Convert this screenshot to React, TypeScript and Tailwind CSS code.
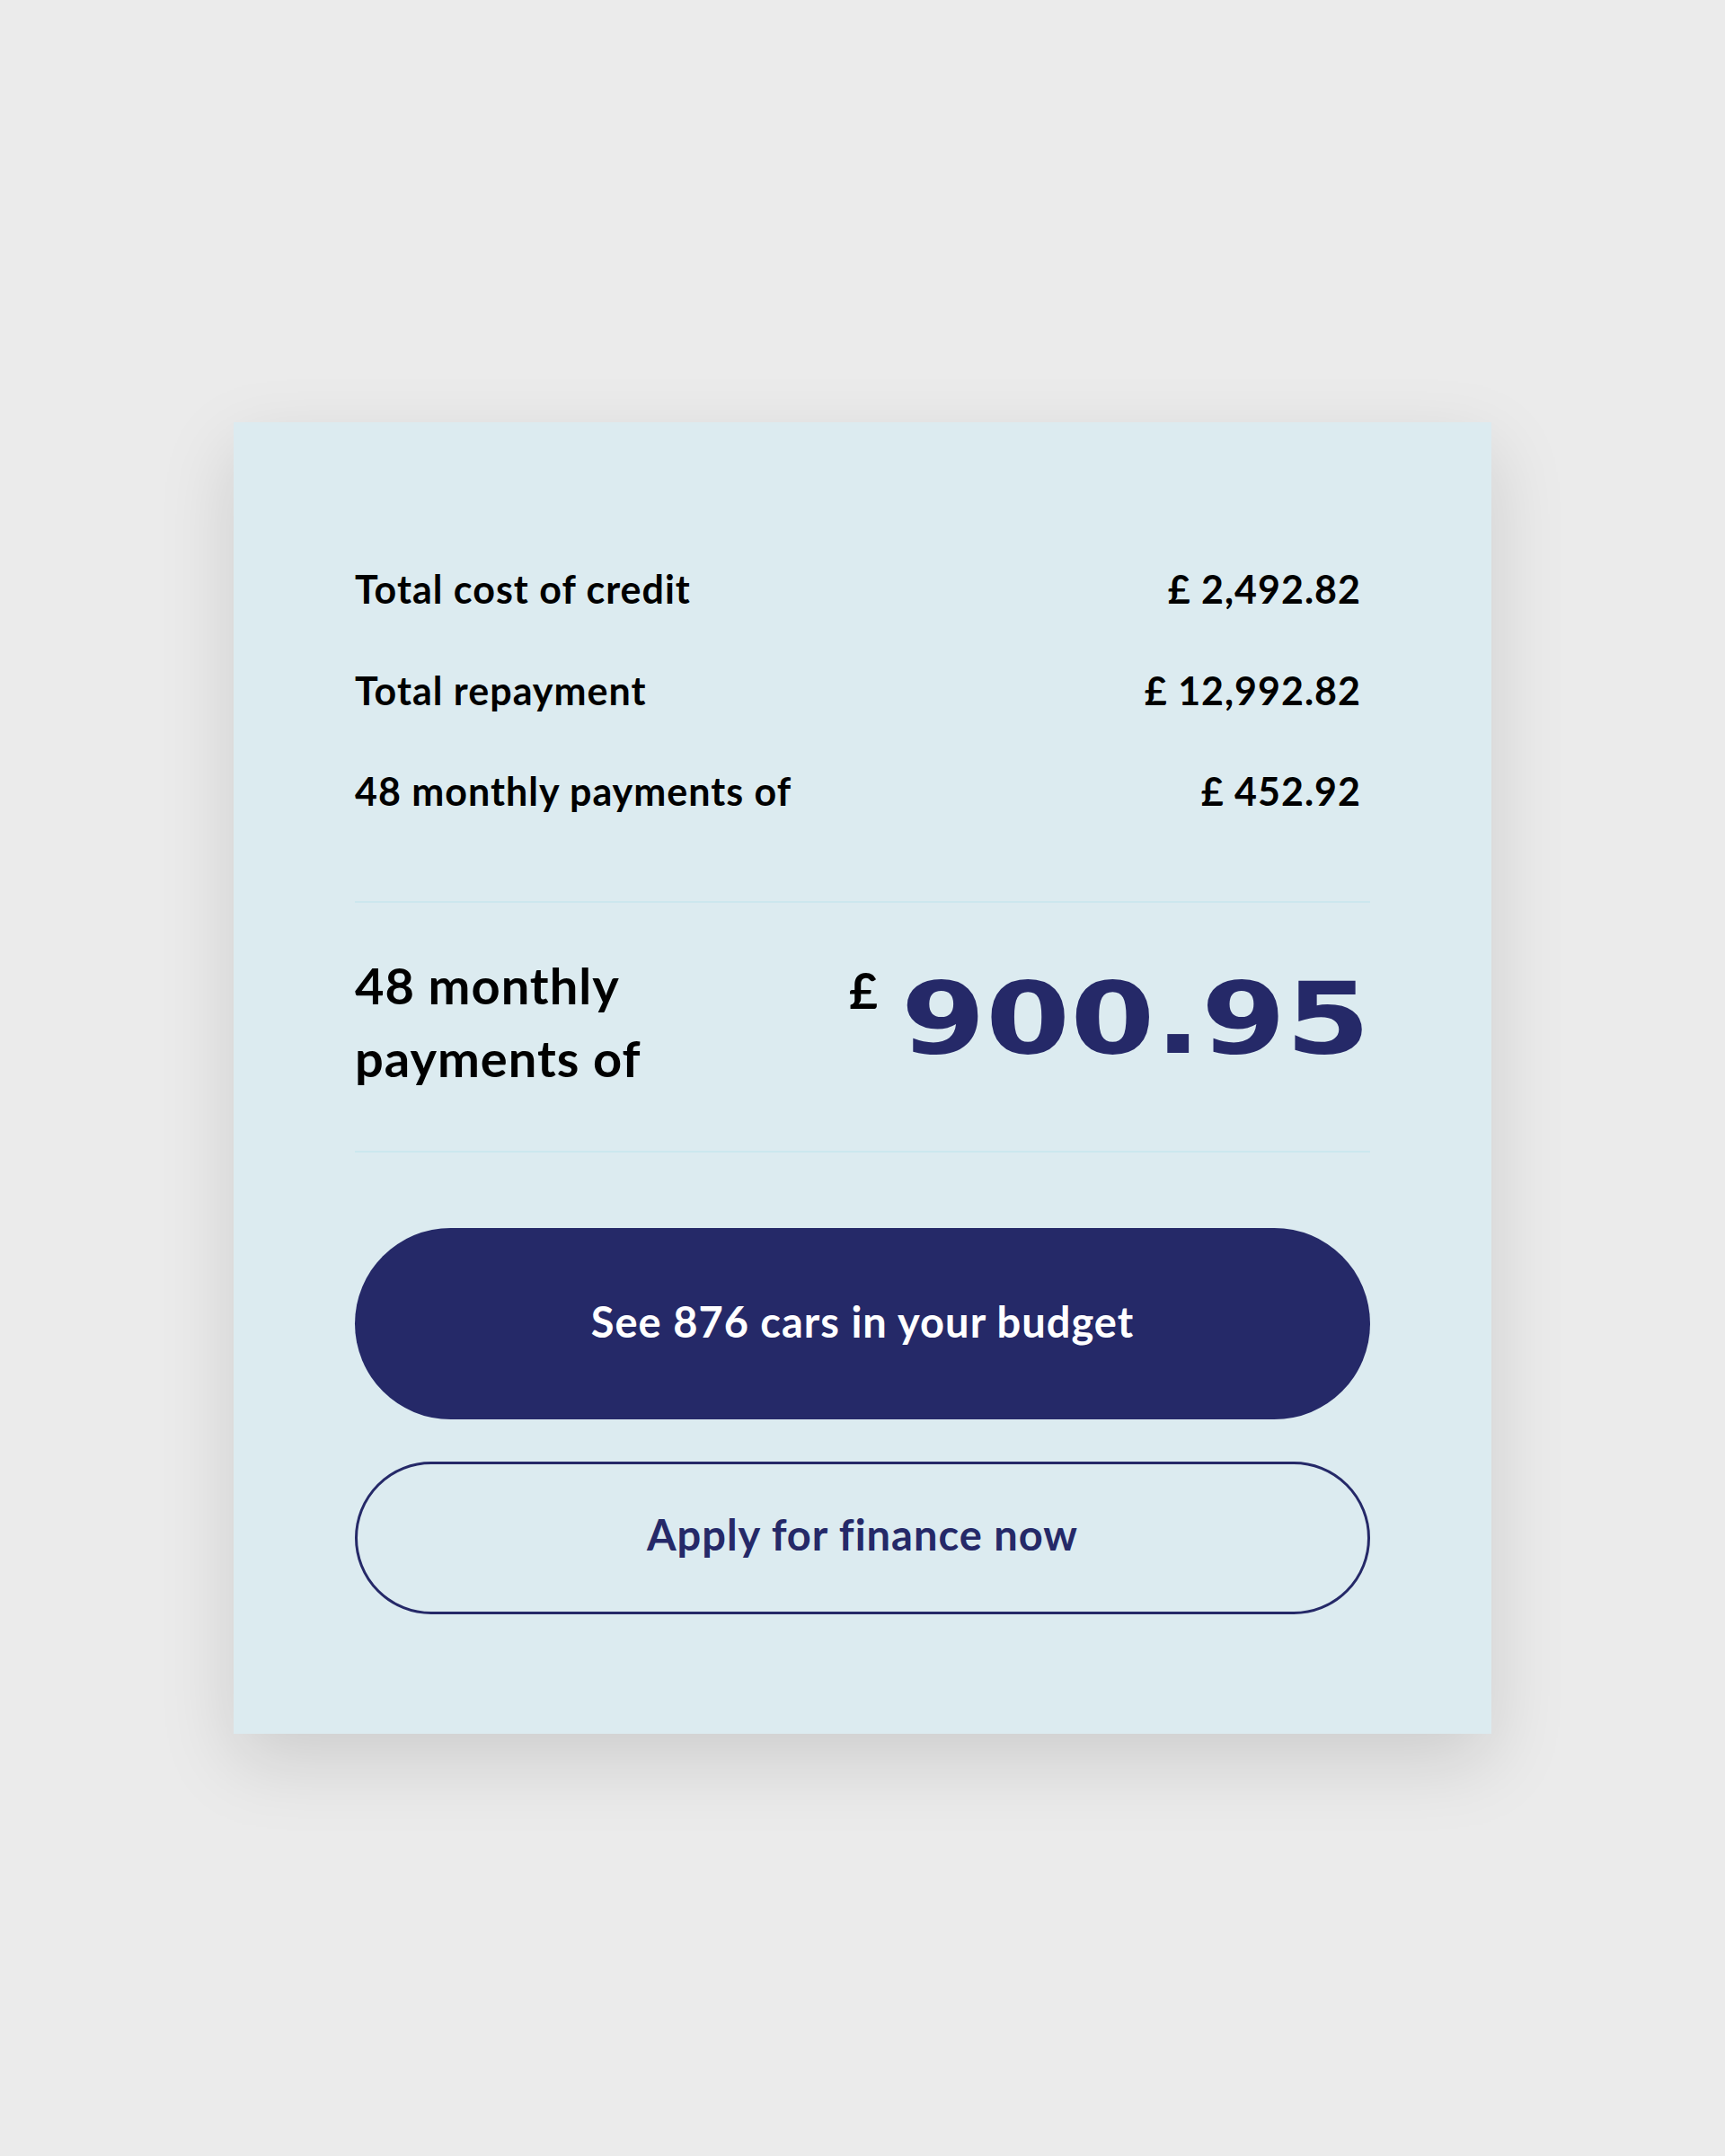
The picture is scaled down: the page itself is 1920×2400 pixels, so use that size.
const navy = "#252968";

const rows = [
  { label: "Total cost of credit", value: "£ 2,492.82" },
  { label: "Total repayment", value: "£ 12,992.82" },
  { label: "48 monthly payments of", value: "£ 452.92" },
];

export default function App() {
  return (
    <div
      className="min-h-[2400px] w-full bg-[#ebebeb] flex justify-center pt-[470px]"
      style={{ fontFamily: "Lato, 'Open Sans', sans-serif" }}
    >
      <div className="w-[1400px] h-[1460px] bg-[#dcebf0] shadow-[0_30px_80px_rgba(0,0,0,0.13)] px-[135px] pt-[154px] text-black tracking-[1px]">
        {/* summary rows */}
        <div className="flex flex-col gap-[49.5px]">
          {rows.map((r) => (
            <div key={r.label} className="flex items-center justify-between pr-[10px] text-[43px] leading-[63px] font-bold">
              <span>{r.label}</span>
              <span>{r.value}</span>
            </div>
          ))}
        </div>

        <div className="mt-[91px] h-[2px] bg-[#cce7ee]" />

        {/* monthly headline */}
        <div className="flex items-start justify-between mt-[51px]">
          <div className="w-[380px] text-[56px] leading-[81px] font-bold">48 monthly payments of</div>
          <div className="flex items-start">
            <span className="text-[55px] leading-none font-bold mt-[19px] mr-[34px]">£</span>
            <div className="w-[513px] flex justify-end mt-[22px]">
              <span
                className="inline-block origin-right scale-x-[1.22] text-[111px] leading-none font-bold tracking-normal"
                style={{ fontFamily: "'DejaVu Sans', sans-serif", color: navy }}
              >
                900.95
              </span>
            </div>
          </div>
        </div>

        <div className="mt-[63px] h-[2px] bg-[#cce7ee]" />

        {/* actions */}
        <div className="flex flex-col mt-[84px] gap-[47px]">
          <button className="h-[213px] w-full rounded-full bg-[#252968] text-white text-[47px] font-bold pb-[4px]">
            See 876 cars in your budget
          </button>
          <button className="h-[170px] w-full rounded-full border-[3px] border-[#252968] text-[#252968] text-[47px] font-bold pb-[8px]">
            Apply for finance now
          </button>
        </div>
      </div>
    </div>
  );
}
